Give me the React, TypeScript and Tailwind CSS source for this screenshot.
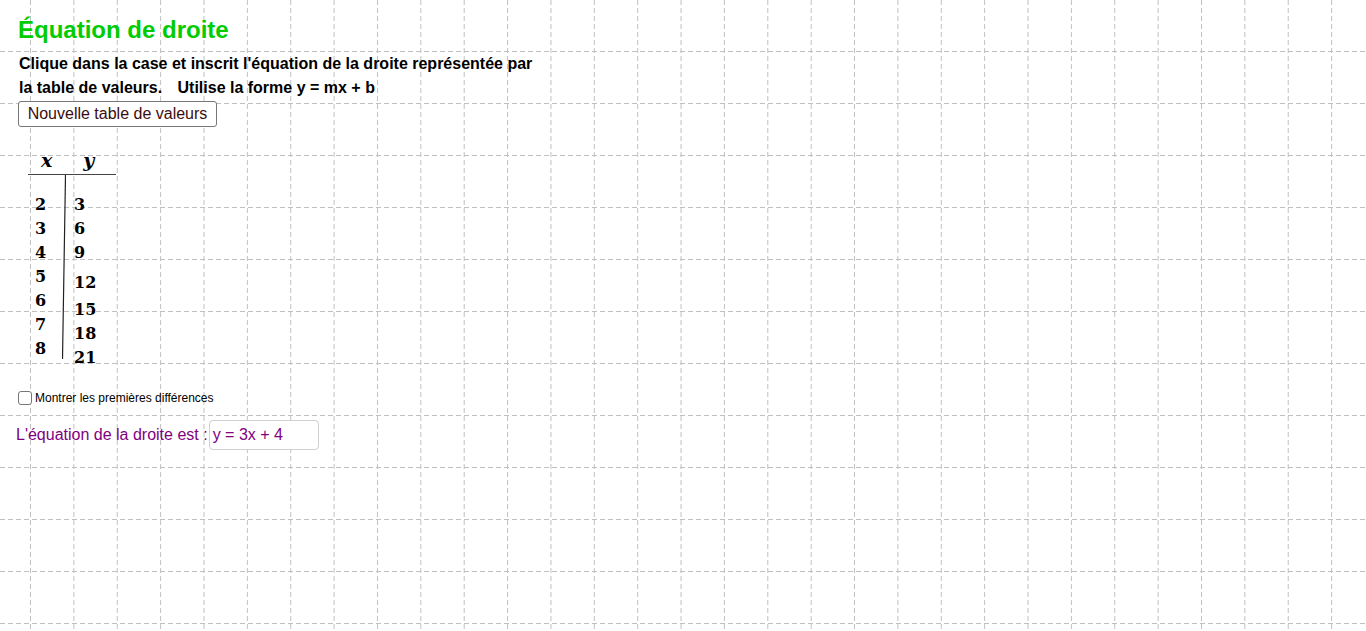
import React from 'react';

const GridBackground: React.FC = () => {
  const cols = Array.from({ length: 32 }, (_, i) => 30.5 + i * 43.37);
  const rows = Array.from({ length: 13 }, (_, i) => -0.5 + i * 52);
  return (
    <svg className="absolute inset-0" width="1366" height="631">
      {cols.map(x => (
        <line key={'v' + x} x1={x} y1={0} x2={x} y2={631} stroke="#c0c0c0" strokeWidth={1} strokeDasharray="5 3" />
      ))}
      {rows.map(y => (
        <line key={'h' + y} x1={0} y1={y} x2={1366} y2={y} stroke="#c0c0c0" strokeWidth={1} strokeDasharray="5 3" />
      ))}
    </svg>
  );
};

const ValueTable: React.FC = () => {
  const xs = ['2', '3', '4', '5', '6', '7', '8'];
  const ys = [
    { v: '3', mt: 'mt-[0px]' },
    { v: '6', mt: 'mt-[0px]' },
    { v: '9', mt: 'mt-[0px]' },
    { v: '12', mt: 'mt-[6px]' },
    { v: '15', mt: 'mt-[3px]' },
    { v: '18', mt: 'mt-[0px]' },
    { v: '21', mt: 'mt-[0px]' },
  ];
  return (
    <div className="ml-[10px] mt-[22px] w-[88px] font-['DejaVu_Serif','Liberation_Serif',serif] font-bold text-black">
      {/* header */}
      <div className="flex h-[26px] items-end border-b border-[#444] pb-[3px] text-[19px] italic leading-[22px]">
        <span className="ml-[13px]">x</span>
        <span className="ml-[31px]">y</span>
      </div>
      <div className="flex">
        <div className="w-[34px] pl-[7px] pt-[18px] text-[16px] leading-[24px]">
          {xs.map(x => (
            <div key={x}>{x}</div>
          ))}
        </div>
        <svg width="4" height="184" className="shrink-0">
          <line x1="3.5" y1="0" x2="0.5" y2="184" stroke="#222" strokeWidth={1.2} />
        </svg>
        <div className="pl-[8px] pt-[18px] text-[16px] leading-[24px]">
          {ys.map(y => (
            <div key={y.v} className={y.mt}>{y.v}</div>
          ))}
        </div>
      </div>
    </div>
  );
};

export default function App() {
  return (
    <div className="relative h-[631px] w-[1366px] overflow-hidden bg-white font-['Liberation_Sans',Arial,sans-serif]">
      <GridBackground />
      <div className="relative pl-[18px] pt-[16px]">
        <h1 className="text-[24px] font-bold leading-[28px] text-[#00cc00]">Équation de droite</h1>
        <p className="mt-[8px] ml-[1px] text-[16px] font-bold leading-[24px] text-black">
          Clique dans la case et inscrit l'équation de la droite représentée par
          <br />
          la table de valeurs.&nbsp;&nbsp; <span className="ml-[2px]">Utilise la forme y = mx + b</span>
        </p>
        <button className="mt-[1px] h-[26px] w-[199px] rounded-[3px] border border-[#777] bg-white text-[16px] leading-[20px] text-[#3b0d0d]">
          Nouvelle table de valeurs
        </button>
        <ValueTable />
        <label className="mt-[21px] flex items-center">
          <span className="inline-block h-[14px] w-[14px] rounded-[3px] border border-[#777] bg-white" />
          <span className="ml-[3px] text-[12px] leading-[14px] text-black">Montrer les premières différences</span>
        </label>
        <div className="-ml-[2px] mt-[15px] flex items-center">
          <span className="text-[16px] leading-[20px] text-[#800080]">L'équation de la droite est :</span>
          <div className="ml-[1px] flex h-[30px] w-[110px] items-center rounded-[4px] border border-[#d0d0d0] bg-white pl-[3px] text-[16px] text-[#800080]">
            y = 3x + 4
          </div>
        </div>
      </div>
    </div>
  );
}
